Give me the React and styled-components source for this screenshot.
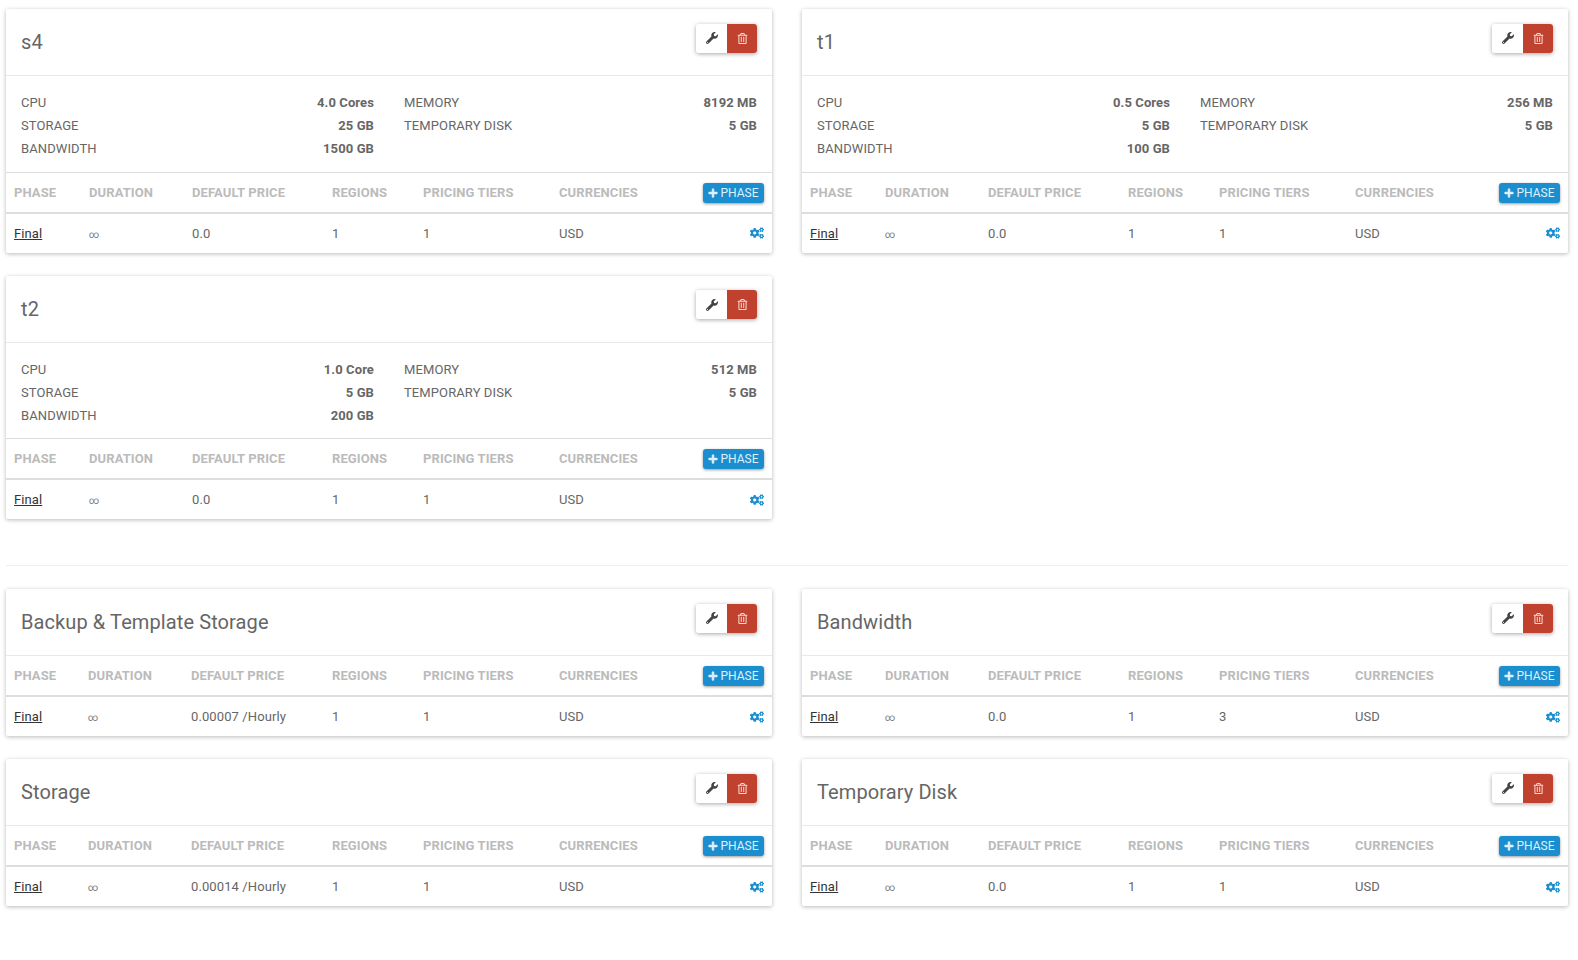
import React from "react";
import styled, { createGlobalStyle } from "styled-components";
import { FaCogs, FaWrench, FaRegTrashAlt, FaPlus } from "react-icons/fa";

const Global = createGlobalStyle`
  html, body { margin: 0; background: #fff; }
  body { font-family: Roboto, "Liberation Sans", sans-serif; font-size: 13px; color: #666; }
`;

const Page = styled.div`
  padding: 9px 10px 50px 6px;
`;
const Section = styled.section`
  display: grid;
  grid-template-columns: 766px 766px;
  column-gap: 30px;
  row-gap: 23px;
  align-items: start;
`;
const Divider = styled.hr`
  border: 0;
  border-top: 1px solid #eee;
  margin: 46px 0 23px;
`;
const Card = styled.article`
  background: #fff;
  border-radius: 2px;
  box-shadow: 0 1px 4px rgba(0, 0, 0, 0.28);
`;
const Header = styled.header`
  height: 67px;
  box-sizing: border-box;
  padding: 0 15px;
  display: flex;
  align-items: center;
  justify-content: space-between;
  border-bottom: 1px solid #e8e8e8;
`;
const Title = styled.h3`
  margin: 0;
  font-weight: 400;
  font-size: 20px;
  letter-spacing: 0.1px;
  color: #666;
`;
const ButtonGroup = styled.div`
  display: flex;
  height: 29px;
  margin-top: -8px;
  border-radius: 3px;
  box-shadow: 0 1px 4px rgba(0, 0, 0, 0.35);
  overflow: hidden;
`;
const IconButton = styled.button`
  border: 0;
  padding: 0;
  width: ${(p) => p.$w}px;
  display: flex;
  align-items: center;
  justify-content: center;
  font-size: ${(p) => (p.$danger ? 11 : 12)}px;
  background: ${(p) => (p.$danger ? "#c0412e" : "#fff")};
  color: ${(p) => (p.$danger ? "#f5d9d4" : "#444")};
`;
const Specs = styled.div`
  display: grid;
  grid-template-columns: 1fr 1fr;
  column-gap: 30px;
  padding: 15px 15px 11.5px;
  border-bottom: 1px solid #ddd;
`;
const SpecColumn = styled.dl`
  margin: 0;
`;
const SpecRow = styled.div`
  display: flex;
  justify-content: space-between;
  height: 23px;
  line-height: 23px;
  letter-spacing: 0.1px;
`;
const SpecLabel = styled.dt``;
const SpecValue = styled.dd`
  margin: 0;
  font-weight: 700;
`;
const Table = styled.table`
  width: 100%;
  table-layout: fixed;
  border-collapse: collapse;
`;
const Th = styled.th`
  height: 39px;
  padding: 0 0 0 8px;
  text-align: left;
  font-weight: 700;
  font-size: 13px;
  letter-spacing: 0.1px;
  color: #bbb;
  border-bottom: 2px solid #ddd;
`;
const Td = styled.td`
  height: 39px;
  padding: 0 0 0 8px;
  letter-spacing: 0.1px;
  color: #666;
`;
const ActionCell = styled.div`
  display: flex;
  justify-content: flex-end;
  padding-right: 8px;
`;
const PhaseLink = styled.a`
  color: #333;
  text-decoration: underline;
`;
const InfinityMark = styled.span`
  font-size: 10px;
  color: #777;
`;
const AddPhase = styled.button`
  border: 0;
  width: 61px;
  height: 20px;
  margin-top: 1px;
  padding: 0;
  border-radius: 3px;
  background: #1b8ecf;
  color: #dff0fa;
  font: 400 12px Roboto, sans-serif;
  display: flex;
  align-items: center;
  justify-content: center;
  gap: 2px;
  box-shadow: 0 1px 3px rgba(0, 0, 0, 0.4);
`;
const PlusIcon = styled(FaPlus)`
  font-size: 10px;
  stroke: currentColor;
  stroke-width: 30;
`;
const Cogs = styled(FaCogs)`
  color: #1b8ecf;
  font-size: 14px;
  display: block;
`;
const Price = styled.span`
  white-space: nowrap;
`;

const wide = [75, 103, 140, 91, 136, 110];
const narrow = [74, 103, 141, 91, 136, 110];

const Phases = ({ cols, price, tiers }) => (
  <Table>
    <colgroup>
      {cols.map((w, i) => <col key={i} width={w} />)}
      <col />
    </colgroup>
    <thead>
      <tr>
        <Th>PHASE</Th>
        <Th>DURATION</Th>
        <Th>DEFAULT PRICE</Th>
        <Th>REGIONS</Th>
        <Th>PRICING TIERS</Th>
        <Th>CURRENCIES</Th>
        <Th><ActionCell><AddPhase><PlusIcon />PHASE</AddPhase></ActionCell></Th>
      </tr>
    </thead>
    <tbody>
      <tr>
        <Td><PhaseLink>Final</PhaseLink></Td>
        <Td><InfinityMark>∞</InfinityMark></Td>
        <Td><Price>{price}</Price></Td>
        <Td>1</Td>
        <Td>{tiers}</Td>
        <Td>USD</Td>
        <Td><ActionCell><Cogs /></ActionCell></Td>
      </tr>
    </tbody>
  </Table>
);

const Spec = ({ label, value }) => (
  <SpecRow><SpecLabel>{label}</SpecLabel><SpecValue>{value}</SpecValue></SpecRow>
);

const Product = ({ title, specs, cols = wide, price = "0.0", tiers = 1 }) => (
  <Card>
    <Header>
      <Title>{title}</Title>
      <ButtonGroup>
        <IconButton $w={31}><FaWrench /></IconButton>
        <IconButton $w={30} $danger><FaRegTrashAlt /></IconButton>
      </ButtonGroup>
    </Header>
    {specs && (
      <Specs>
        <SpecColumn>
          <Spec label="CPU" value={specs[0]} />
          <Spec label="STORAGE" value={specs[1]} />
          <Spec label="BANDWIDTH" value={specs[2]} />
        </SpecColumn>
        <SpecColumn>
          <Spec label="MEMORY" value={specs[3]} />
          <Spec label="TEMPORARY DISK" value={specs[4]} />
        </SpecColumn>
      </Specs>
    )}
    <Phases cols={cols} price={price} tiers={tiers} />
  </Card>
);

export default function App() {
  return (
    <Page>
      <Global />
      <Section>
        <Product title="s4" specs={["4.0 Cores", "25 GB", "1500 GB", "8192 MB", "5 GB"]} />
        <Product title="t1" specs={["0.5 Cores", "5 GB", "100 GB", "256 MB", "5 GB"]} />
        <Product title="t2" specs={["1.0 Core", "5 GB", "200 GB", "512 MB", "5 GB"]} />
      </Section>
      <Divider />
      <Section>
        <Product title="Backup & Template Storage" cols={narrow} price="0.00007 /Hourly" />
        <Product title="Bandwidth" tiers={3} />
        <Product title="Storage" cols={narrow} price="0.00014 /Hourly" />
        <Product title="Temporary Disk" />
      </Section>
    </Page>
  );
}
